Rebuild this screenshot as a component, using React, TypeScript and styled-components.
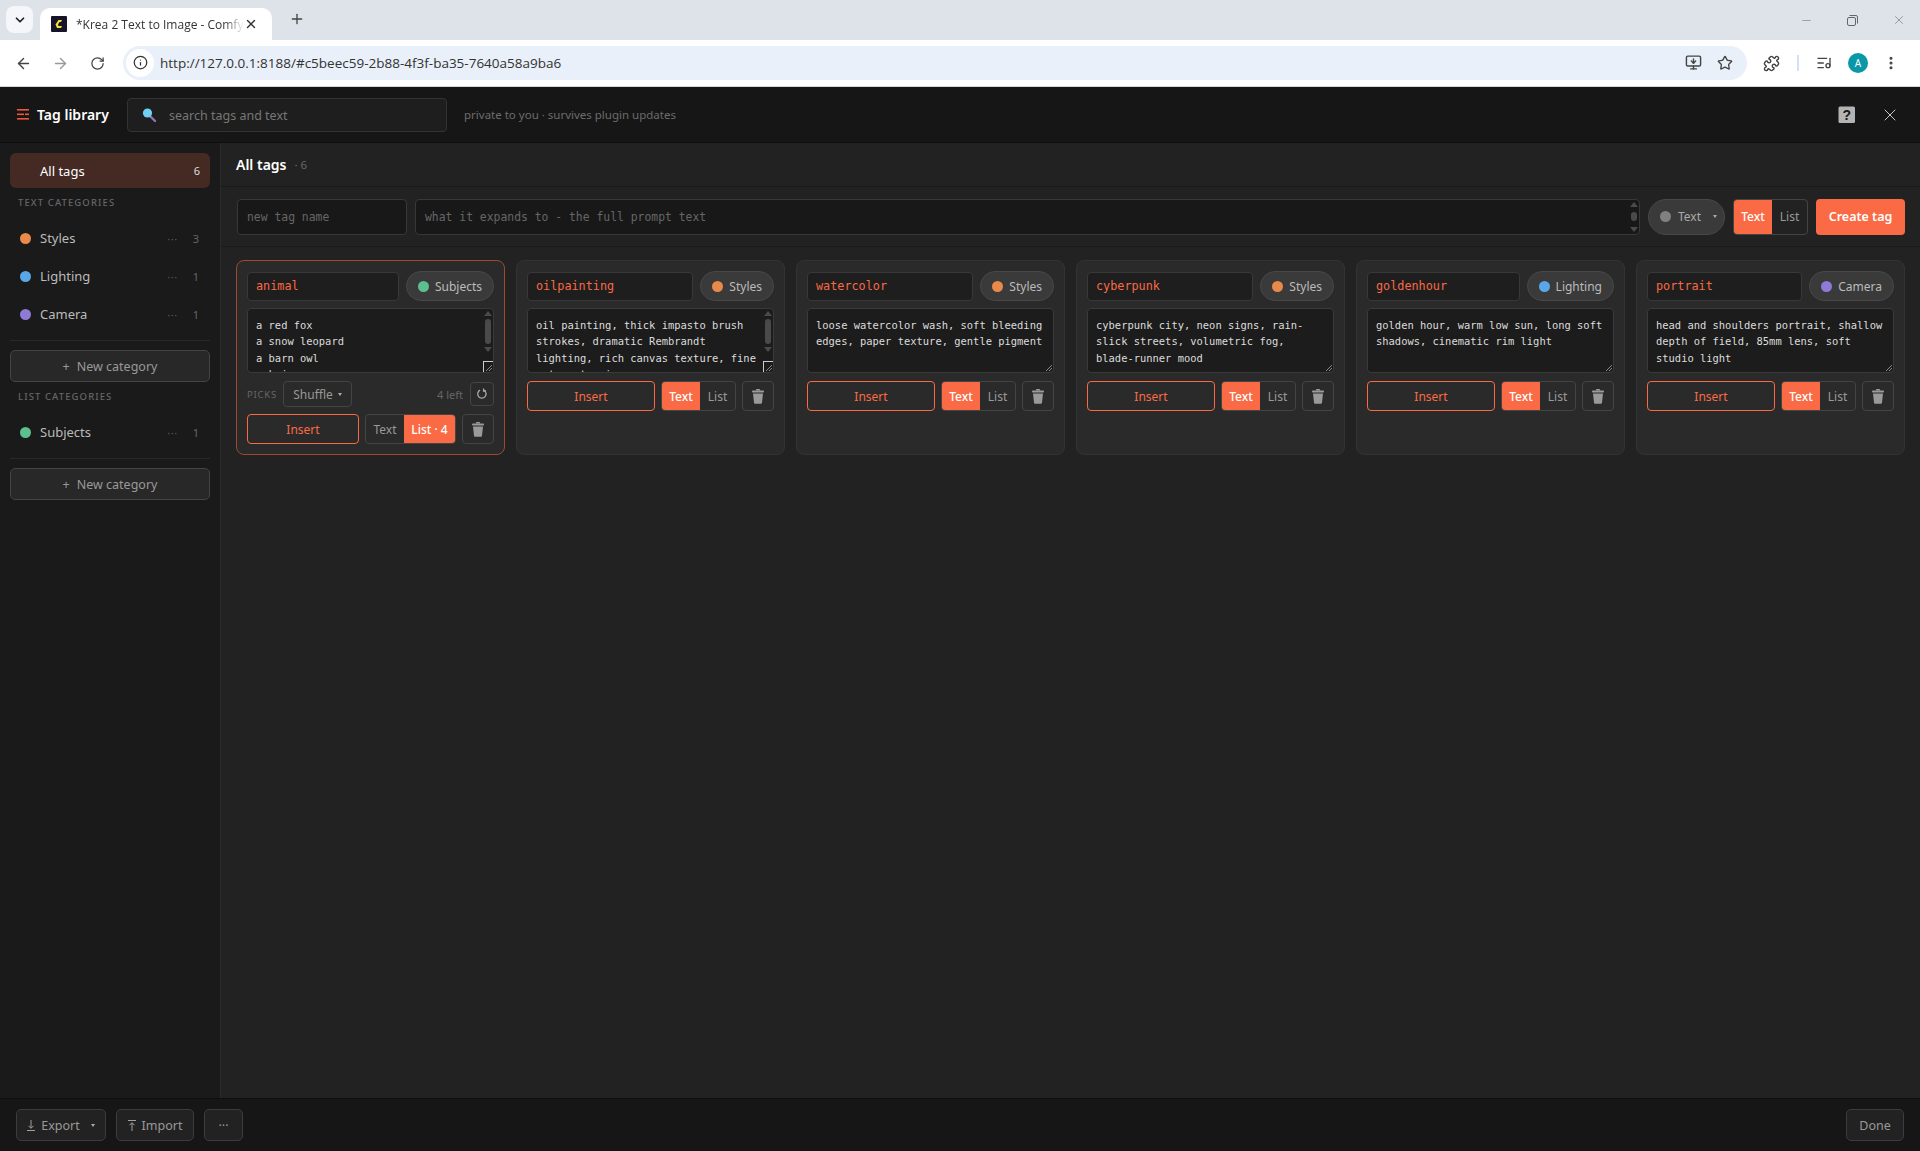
import React from "react";
import styled, { createGlobalStyle } from "styled-components";
import {
  ArrowLeft,
  ArrowRight,
  ChevronDown,
  EllipsisVertical,
  Info,
  ListMusic,
  Minus,
  MonitorDown,
  Plus,
  Puzzle,
  RotateCw,
  Star,
  X,
} from "lucide-react";

const accent = "#f96a45";
const uiFont = `"Noto Sans", "Open Sans", sans-serif`;
const monoFont = `"DejaVu Sans Mono", "Liberation Mono", monospace`;

const GlobalStyle = createGlobalStyle`
  html, body {
    margin: 0;
    padding: 0;
    height: 100%;
    background: #222;
    font-family: ${uiFont};
    overflow: hidden;
  }
  #root { height: 100%; }
  * { box-sizing: border-box; }
`;

const Page = styled.div`
  height: 1151px;
  display: flex;
  flex-direction: column;
`;

/* browser chrome */
const TabStrip = styled.div`
  height: 40px;
  background: #dee3ea;
  display: flex;
  align-items: flex-end;
  padding-left: 6px;
  flex-shrink: 0;
`;

const TabScroller = styled.div`
  width: 27px;
  height: 27px;
  margin-bottom: 7px;
  border-radius: 8px;
  background: #f4f6fa;
  color: #222;
  display: flex;
  align-items: center;
  justify-content: center;
`;

const Tab = styled.div`
  width: 232px;
  height: 32px;
  margin-left: 7px;
  background: #fff;
  border-radius: 10px 10px 0 0;
  display: flex;
  align-items: center;
  padding: 0 9px 0 11px;
  color: #333;
  font-size: 12px;
`;

const TabTitle = styled.span`
  margin-left: 9px;
  width: 168px;
  white-space: nowrap;
  overflow: hidden;
  font-family: "Open Sans", sans-serif;
  -webkit-mask-image: linear-gradient(90deg, #000 88%, transparent);
`;

const NewTab = styled.div`
  margin: 0 0 7px 11px;
  width: 28px;
  height: 28px;
  color: #444;
  display: flex;
  align-items: center;
  justify-content: center;
`;

const WindowControls = styled.div`
  margin-left: auto;
  height: 40px;
  display: flex;
  align-items: center;
  color: #666;
  padding-right: 14px;
  gap: 34px;
`;

const Toolbar = styled.div`
  height: 47px;
  background: #fff;
  border-bottom: 1px solid #d6d6d6;
  display: flex;
  align-items: center;
  padding-left: 13px;
  flex-shrink: 0;
  color: #444;
`;

const NavButton = styled.div<{ $muted?: boolean }>`
  width: 20px;
  margin-right: 17px;
  display: flex;
  justify-content: center;
  color: ${(p) => (p.$muted ? "#999" : "#444")};
`;

const Omnibox = styled.div`
  width: 1624px;
  height: 34px;
  margin-left: -1px;
  margin-top: -1px;
  background: #e9f0f9;
  border-radius: 17px;
  display: flex;
  align-items: center;
  padding-left: 3px;
  padding-right: 14px;
`;

const SiteInfo = styled.div`
  width: 28px;
  height: 28px;
  border-radius: 50%;
  background: #fff;
  color: #333;
  display: flex;
  align-items: center;
  justify-content: center;
  margin-right: 6px;
`;

const Url = styled.span`
  color: #333;
  font-size: 13.5px;
  font-family: "Open Sans", sans-serif;
  flex: 1;
`;

const OmniIcons = styled.div`
  display: flex;
  gap: 15px;
  align-items: center;
`;

const ToolbarIcons = styled.div`
  flex: 1;
  display: flex;
  align-items: center;
  padding-left: 16px;
`;

const ToolbarDivider = styled.div`
  width: 2px;
  height: 16px;
  background: #d3e0f5;
  margin: 0 17px;
`;

const Avatar = styled.div`
  width: 20px;
  height: 20px;
  border-radius: 50%;
  background: #0a97a8;
  color: #fff;
  font-size: 10px;
  display: flex;
  align-items: center;
  justify-content: center;
  margin: 0 15px 0 16px;
`;

/* app */
const Header = styled.header`
  height: 56px;
  background: #161616;
  border-bottom: 1px solid #0e0e0e;
  display: flex;
  align-items: center;
  padding: 0 20px 0 17px;
  flex-shrink: 0;
`;

const HeaderTitle = styled.span`
  color: #fff;
  font-weight: 600;
  font-size: 14px;
  margin-left: 8px;
  width: 90px;
  white-space: nowrap;
`;

const SearchBox = styled.div`
  width: 320px;
  height: 34px;
  margin-top: 1px;
  background: #1e1e1e;
  border: 1px solid #333;
  border-radius: 4px;
  display: flex;
  align-items: center;
  padding-left: 13px;
  gap: 12px;
  color: #777;
  font-size: 12.5px;
`;

const HeaderHint = styled.span`
  color: #6c6c6c;
  font-size: 11.5px;
  margin-left: 17px;
`;

const HeaderRight = styled.div`
  margin-left: auto;
  display: flex;
  align-items: center;
  gap: 24px;
  color: #c8c8c8;
`;

const Body = styled.div`
  flex: 1;
  min-height: 0;
  display: flex;
`;

const Sidebar = styled.aside`
  width: 221px;
  flex-shrink: 0;
  background: #1a1a1a;
  border-right: 1px solid #2a2a2a;
  padding: 10px 10px 0;
`;

const AllTags = styled.div`
  height: 35px;
  background: #452a24;
  border-radius: 6px;
  display: flex;
  align-items: center;
  padding: 0 10px 0 30px;
  color: #fff;
  font-size: 13px;
  justify-content: space-between;
`;

const AllCount = styled.span`
  font-size: 11px;
  color: #ddd;
`;

const SectionLabel = styled.div`
  height: 31px;
  padding: 8px 0 0 8px;
  font-size: 9.5px;
  line-height: 13px;
  letter-spacing: 1.1px;
  font-weight: 500;
  color: #666;
  white-space: nowrap;
`;

const CategoryRow = styled.div`
  height: 38px;
  display: flex;
  align-items: center;
  padding: 0 11px 0 10px;
  color: #bbb;
  font-size: 13px;
`;

const Dot = styled.span<{ $color: string; $size?: number }>`
  width: ${(p) => p.$size ?? 11}px;
  height: ${(p) => p.$size ?? 11}px;
  border-radius: 50%;
  background: ${(p) => p.$color};
  flex-shrink: 0;
`;

const CategoryName = styled.span`
  margin-left: 9px;
  flex: 1;
`;

const RowMenu = styled.span`
  color: #555;
  font-size: 11px;
  letter-spacing: 0.5px;
  margin-right: 15px;
`;

const RowCount = styled.span`
  color: #666;
  font-size: 11px;
`;

const SideDivider = styled.div`
  height: 1px;
  background: #282828;
  margin: 7px 0 9px;
`;

const NewCategory = styled.button`
  display: flex;
  width: 100%;
  height: 32px;
  align-items: center;
  justify-content: center;
  gap: 7px;
  background: #282828;
  border: 1px solid #444;
  border-radius: 5px;
  color: #999;
  font-family: ${uiFont};
  font-size: 12.5px;
`;

const Main = styled.main`
  flex: 1;
  min-width: 0;
  background: #222;
  display: flex;
  flex-direction: column;
`;

const TitleRow = styled.div`
  height: 44px;
  display: flex;
  align-items: center;
  padding: 0 15px;
  border-bottom: 1px solid #1a1a1a;
  flex-shrink: 0;
`;

const Title = styled.span`
  color: #fff;
  font-size: 14px;
  font-weight: 600;
`;

const TitleCount = styled.span`
  color: #666;
  font-size: 11.5px;
  margin-left: 8px;
`;

const FormRow = styled.div`
  height: 60px;
  display: flex;
  align-items: center;
  gap: 8px;
  padding: 0 15px 0 16px;
  border-bottom: 1px solid #1a1a1a;
  flex-shrink: 0;
`;

const NameField = styled.div`
  width: 170px;
  height: 36px;
  background: #181818;
  border: 1px solid #383838;
  border-radius: 4px;
  display: flex;
  align-items: center;
  padding-left: 9px;
  font-family: ${monoFont};
  font-size: 11.4px;
  color: #666;
`;

const ExpandField = styled(NameField)`
  flex: 1;
  position: relative;
`;

const FormScrollbar = styled.div`
  position: absolute;
  right: 1px;
  top: 2px;
  bottom: 2px;
  width: 8px;
  display: flex;
  flex-direction: column;
  align-items: center;
  justify-content: space-between;
`;

const ScrollThumb = styled.div<{ $height: number }>`
  width: 6px;
  height: ${(p) => p.$height}px;
  border-radius: 3px;
  background: #4a4a4a;
`;

const ArrowUp = styled.div`
  width: 0;
  height: 0;
  border-left: 4px solid transparent;
  border-right: 4px solid transparent;
  border-bottom: 5px solid #4a4a4a;
`;

const ArrowDown = styled(ArrowUp)`
  border-bottom: 0;
  border-top: 5px solid #4a4a4a;
`;

const Pill = styled.div`
  height: 36px;
  width: 77px;
  background: #3a3a3a;
  border: 1px solid #484848;
  border-radius: 18px;
  display: flex;
  align-items: center;
  padding-left: 11px;
  gap: 7px;
  color: #aaa;
  font-size: 12px;
`;

const Caret = styled.span`
  width: 0;
  height: 0;
  margin-left: 5px;
  border-left: 2.5px solid transparent;
  border-right: 2.5px solid transparent;
  border-top: 3px solid #aaa;
`;

const Segmented = styled.div<{ $h: number }>`
  height: ${(p) => p.$h}px;
  display: flex;
  border: 1px solid #444;
  border-radius: 4px;
  overflow: hidden;
  flex-shrink: 0;
`;

const Segment = styled.span<{ $on?: boolean; $w: number }>`
  width: ${(p) => p.$w}px;
  display: flex;
  align-items: center;
  justify-content: center;
  font-size: 12px;
  white-space: nowrap;
  background: ${(p) => (p.$on ? accent : "transparent")};
  color: ${(p) => (p.$on ? "#fff" : "#999")};
  font-weight: ${(p) => (p.$on ? 500 : 400)};
`;

const CreateButton = styled.button`
  width: 89px;
  height: 36px;
  background: ${accent};
  border: 0;
  border-radius: 4px;
  color: #fff;
  font-family: ${uiFont};
  font-size: 12.5px;
  font-weight: 600;
  padding: 0;
`;

const CardGrid = styled.div`
  display: grid;
  grid-template-columns: repeat(6, 1fr);
  gap: 11px;
  padding: 13px 15px;
  align-items: stretch;
`;

const Card = styled.article<{ $selected?: boolean }>`
  min-height: 194px;
  background: #2a2a2a;
  border: 1px solid ${(p) => (p.$selected ? "#9c4a34" : "#333")};
  border-radius: 8px;
  padding: 10px;
  display: flex;
  flex-direction: column;
`;

const CardHead = styled.div`
  display: flex;
  align-items: center;
  gap: 7px;
`;

const CardName = styled.div`
  flex: 1;
  height: 29px;
  background: #1e1e1e;
  border: 1px solid #383838;
  border-radius: 4px;
  display: flex;
  align-items: center;
  padding-left: 8px;
  color: ${accent};
  font-family: ${monoFont};
  font-size: 11.8px;
`;

const CategoryPill = styled.div`
  height: 30px;
  flex-shrink: 0;
  background: #3a3a3a;
  border: 1px solid #484848;
  border-radius: 15px;
  display: flex;
  align-items: center;
  padding: 0 11px;
  gap: 6px;
  color: #bbb;
  font-size: 12px;
`;

const TextBox = styled.div`
  position: relative;
  margin-top: 7px;
  height: 65px;
  background: #1c1c1c;
  border: 1px solid #3a3a3a;
  border-radius: 4px;
  overflow: hidden;
`;

const PromptArea = styled.textarea`
  display: block;
  width: 100%;
  height: 100%;
  padding: 8px 8px 0;
  background: transparent;
  border: 0;
  outline: 0;
  resize: none;
  overflow: hidden;
  color: #ddd;
  font-family: ${monoFont};
  font-size: 10.45px;
  line-height: 16.4px;
`;

const CardScrollbar = styled.div`
  position: absolute;
  right: 0;
  top: 2px;
  bottom: 12px;
  width: 10px;
  display: flex;
  flex-direction: column;
  align-items: center;
  gap: 3px;
`;

const Corner = styled.div`
  position: absolute;
  right: 0;
  bottom: 0;
  width: 10px;
  height: 11px;
  border: 1px solid #ccc;
  border-right: 0;
  border-bottom: 0;
  background: #1c1c1c;
`;

const ResizeGrip = styled.svg`
  position: absolute;
  right: 0;
  bottom: 0;
`;

const PicksRow = styled.div`
  display: flex;
  align-items: center;
  margin-top: 8px;
  height: 26px;
`;

const PicksLabel = styled.span`
  color: #666;
  font-size: 9.5px;
  letter-spacing: 0.8px;
  width: 36px;
`;

const Dropdown = styled.div`
  width: 69px;
  height: 26px;
  border: 1px solid #444;
  border-radius: 4px;
  display: flex;
  align-items: center;
  justify-content: center;
  color: #999;
  font-size: 12px;
`;

const LeftCount = styled.span`
  margin-left: auto;
  margin-right: 7px;
  color: #666;
  font-size: 11px;
`;

const SquareButton = styled.div<{ $w: number; $h: number }>`
  width: ${(p) => p.$w}px;
  height: ${(p) => p.$h}px;
  border: 1px solid #444;
  border-radius: 4px;
  display: flex;
  align-items: center;
  justify-content: center;
  color: #999;
  flex-shrink: 0;
`;

const ActionRow = styled.div<{ $gap: number }>`
  display: flex;
  align-items: center;
  gap: 6px;
  margin-top: ${(p) => p.$gap}px;
`;

const InsertButton = styled.button`
  flex: 1;
  min-width: 0;
  height: 30px;
  padding: 0;
  background: transparent;
  border: 1px solid ${accent};
  border-radius: 4px;
  color: ${accent};
  font-family: ${uiFont};
  font-size: 12px;
`;

const Footer = styled.footer`
  height: 53px;
  background: #161616;
  border-top: 1px solid #0e0e0e;
  display: flex;
  align-items: center;
  padding: 0 16px;
  gap: 10px;
  flex-shrink: 0;
`;

const FootButton = styled.button<{ $w: number }>`
  width: ${(p) => p.$w}px;
  height: 32px;
  background: #222;
  border: 1px solid #3c3c3c;
  border-radius: 5px;
  color: #999;
  display: flex;
  align-items: center;
  justify-content: center;
  gap: 6px;
  padding: 0;
  font-family: ${uiFont};
  font-size: 12.5px;
`;

const DoneButton = styled(FootButton)`
  margin-left: auto;
`;

const Favicon = () => (
  <svg width="16" height="16" viewBox="0 0 16 16">
    <rect width="16" height="16" rx="1" fill="#17142a" />
    <path d="M11 4H7.5L4.5 8.5 6 12h4l1-2H7.5L7 8.5 8.5 6H10z" fill="#f0e23c" />
  </svg>
);

const HamburgerIcon = () => (
  <svg width="12" height="11" viewBox="0 0 12 11">
    <g fill="#f0563a">
      <rect y="0" width="12" height="1.6" />
      <rect y="4.5" width="7" height="1.6" />
      <rect x="8" y="4.5" width="4" height="1.6" />
      <rect y="9" width="12" height="1.6" />
    </g>
  </svg>
);

const SearchIcon = () => (
  <svg width="16" height="16" viewBox="0 0 16 16">
    <line x1="9.5" y1="9.5" x2="14" y2="14" stroke="#9a6fb0" strokeWidth="2.4" strokeLinecap="round" />
    <circle cx="6.5" cy="6" r="4.6" fill="#6fd0f0" />
  </svg>
);

const HelpIcon = () => (
  <svg width="18" height="18" viewBox="0 0 18 18">
    <rect x="0.5" y="0.5" width="16.5" height="16.5" rx="1.5" fill="#b4b4b4" />
    <text x="8.75" y="14" textAnchor="middle" fontSize="14" fontWeight="700" fontFamily="Liberation Sans" fill="#161616">
      ?
    </text>
  </svg>
);

const TrashIcon = () => (
  <svg width="12" height="15" viewBox="0 0 12 15">
    <g fill="#9a9a9a">
      <rect x="4" y="0" width="4" height="1.6" rx="0.5" />
      <rect x="0" y="1.6" width="12" height="2" rx="0.8" />
      <path d="M1 4.6h10l-1 9.2a1 1 0 0 1-1 .9H3a1 1 0 0 1-1-.9z" />
    </g>
  </svg>
);

const RefreshIcon = () => (
  <svg width="12" height="12" viewBox="0 0 12 12" fill="none" stroke="#aaa" strokeWidth="1.3">
    <path d="M4 2.2a4.2 4.2 0 1 0 4 .1" />
    <path d="M8.6 0.6v2.6h2.4" transform="translate(-1 -0.2)" />
  </svg>
);

const ExportIcon = () => (
  <svg width="8" height="11" viewBox="0 0 8 11" fill="none" stroke="#a0a0a0" strokeWidth="1">
    <path d="M4 0v8M1.5 5.8 4 8.3l2.5-2.5M0 10.5h8" />
  </svg>
);

const ImportIcon = () => (
  <svg width="8" height="11" viewBox="0 0 8 11" fill="none" stroke="#a0a0a0" strokeWidth="1">
    <path d="M4 11V3M1.5 5.2 4 2.7l2.5 2.5M0 0.5h8" />
  </svg>
);

const RestoreIcon = () => (
  <svg width="11" height="11" viewBox="0 0 11 11" fill="none" stroke="#666" strokeWidth="1">
    <rect x="0.5" y="2.5" width="8" height="8" rx="1.5" />
    <path d="M2.5 0.5h6.5a1.5 1.5 0 0 1 1.5 1.5v6.5" />
  </svg>
);

const Grip = () => (
  <ResizeGrip width="10" height="10" viewBox="0 0 10 10" stroke="#888" strokeWidth="1">
    <path d="M9 3 3 9M9 6 6 9" />
  </ResizeGrip>
);

type TagData = {
  name: string;
  cat: string;
  color: string;
  text: string;
  list?: boolean;
  scroll?: boolean;
};

const tags: TagData[] = [
  {
    name: "animal",
    cat: "Subjects",
    color: "#5dbf8f",
    text: "a red fox\na snow leopard\na barn owl\na koi carp",
    list: true,
    scroll: true,
  },
  {
    name: "oilpainting",
    cat: "Styles",
    color: "#e88a4a",
    text: "oil painting, thick impasto brush strokes, dramatic Rembrandt lighting, rich canvas texture, fine art masterpiece",
    scroll: true,
  },
  {
    name: "watercolor",
    cat: "Styles",
    color: "#e88a4a",
    text: "loose watercolor wash, soft bleeding edges, paper texture, gentle pigment",
  },
  {
    name: "cyberpunk",
    cat: "Styles",
    color: "#e88a4a",
    text: "cyberpunk city, neon signs, rain-slick streets, volumetric fog, blade-runner mood",
  },
  {
    name: "goldenhour",
    cat: "Lighting",
    color: "#5aa7e8",
    text: "golden hour, warm low sun, long soft shadows, cinematic rim light",
  },
  {
    name: "portrait",
    cat: "Camera",
    color: "#8f7ad8",
    text: "head and shoulders portrait, shallow depth of field, 85mm lens, soft studio light",
  },
];

const TagCard: React.FC<{ tag: TagData }> = ({ tag }) => (
  <Card $selected={tag.list}>
    <CardHead>
      <CardName>{tag.name}</CardName>
      <CategoryPill>
        <Dot $color={tag.color} />
        {tag.cat}
      </CategoryPill>
    </CardHead>
    <TextBox>
      <PromptArea readOnly value={tag.text} />
      {tag.scroll ? (
        <>
          <CardScrollbar>
            <ArrowUp />
            <ScrollThumb $height={25} />
            <ArrowDown />
          </CardScrollbar>
          <Corner />
        </>
      ) : null}
      <Grip />
    </TextBox>
    {tag.list && (
      <PicksRow>
        <PicksLabel>PICKS</PicksLabel>
        <Dropdown>
          Shuffle
          <Caret />
        </Dropdown>
        <LeftCount>4 left</LeftCount>
        <SquareButton $w={24} $h={24}>
          <RefreshIcon />
        </SquareButton>
      </PicksRow>
    )}
    <ActionRow $gap={tag.list ? 7 : 8}>
      <InsertButton>Insert</InsertButton>
      <Segmented $h={30}>
        <Segment $w={tag.list ? 38 : 38} $on={!tag.list}>
          Text
        </Segment>
        <Segment $w={tag.list ? 51 : 35} $on={tag.list}>
          {tag.list ? "List · 4" : "List"}
        </Segment>
      </Segmented>
      <SquareButton $w={32} $h={30}>
        <TrashIcon />
      </SquareButton>
    </ActionRow>
  </Card>
);

const App: React.FC = () => (
  <Page>
    <GlobalStyle />
    <TabStrip>
      <TabScroller>
        <ChevronDown size={14} strokeWidth={3} />
      </TabScroller>
      <Tab>
        <Favicon />
        <TabTitle>*Krea 2 Text to Image - ComfyUI</TabTitle>
        <X size={14} strokeWidth={2.4} />
      </Tab>
      <NewTab>
        <Plus size={16} />
      </NewTab>
      <WindowControls>
        <Minus size={13} strokeWidth={1} />
        <RestoreIcon />
        <X size={14} strokeWidth={1} />
      </WindowControls>
    </TabStrip>
    <Toolbar>
      <NavButton>
        <ArrowLeft size={17} />
      </NavButton>
      <NavButton $muted>
        <ArrowRight size={17} />
      </NavButton>
      <NavButton>
        <RotateCw size={15} />
      </NavButton>
      <Omnibox>
        <SiteInfo>
          <Info size={15} />
        </SiteInfo>
        <Url>http://127.0.0.1:8188/#c5beec59-2b88-4f3f-ba35-7640a58a9ba6</Url>
        <OmniIcons>
          <MonitorDown size={17} />
          <Star size={16} />
        </OmniIcons>
      </Omnibox>
      <ToolbarIcons>
        <Puzzle size={17} />
        <ToolbarDivider />
        <ListMusic size={16} />
        <Avatar>A</Avatar>
        <EllipsisVertical size={16} strokeWidth={2.6} />
      </ToolbarIcons>
    </Toolbar>
    <Header>
      <HamburgerIcon />
      <HeaderTitle>Tag library</HeaderTitle>
      <SearchBox>
        <SearchIcon />
        search tags and text
      </SearchBox>
      <HeaderHint>private to you · survives plugin updates</HeaderHint>
      <HeaderRight>
        <HelpIcon />
        <X size={20} strokeWidth={1.2} />
      </HeaderRight>
    </Header>
    <Body>
      <Sidebar>
        <AllTags>
          All tags
          <AllCount>6</AllCount>
        </AllTags>
        <SectionLabel>TEXT CATEGORIES</SectionLabel>
        <CategoryRow>
          <Dot $color="#e88a4a" />
          <CategoryName>Styles</CategoryName>
          <RowMenu>···</RowMenu>
          <RowCount>3</RowCount>
        </CategoryRow>
        <CategoryRow>
          <Dot $color="#5aa7e8" />
          <CategoryName>Lighting</CategoryName>
          <RowMenu>···</RowMenu>
          <RowCount>1</RowCount>
        </CategoryRow>
        <CategoryRow>
          <Dot $color="#8f7ad8" />
          <CategoryName>Camera</CategoryName>
          <RowMenu>···</RowMenu>
          <RowCount>1</RowCount>
        </CategoryRow>
        <SideDivider />
        <NewCategory>
          <span>+</span> New category
        </NewCategory>
        <SectionLabel>LIST CATEGORIES</SectionLabel>
        <CategoryRow>
          <Dot $color="#5dbf8f" />
          <CategoryName>Subjects</CategoryName>
          <RowMenu>···</RowMenu>
          <RowCount>1</RowCount>
        </CategoryRow>
        <SideDivider />
        <NewCategory>
          <span>+</span> New category
        </NewCategory>
      </Sidebar>
      <Main>
        <TitleRow>
          <Title>All tags</Title>
          <TitleCount>· 6</TitleCount>
        </TitleRow>
        <FormRow>
          <NameField>new tag name</NameField>
          <ExpandField>
            what it expands to - the full prompt text
            <FormScrollbar>
              <ArrowUp />
              <ScrollThumb $height={9} />
              <ArrowDown />
            </FormScrollbar>
          </ExpandField>
          <Pill>
            <Dot $color="#808080" />
            Text
            <Caret />
          </Pill>
          <Segmented $h={36}>
            <Segment $w={38} $on>
              Text
            </Segment>
            <Segment $w={35}>List</Segment>
          </Segmented>
          <CreateButton>Create tag</CreateButton>
        </FormRow>
        <CardGrid>
          {tags.map((t) => (
            <TagCard key={t.name} tag={t} />
          ))}
        </CardGrid>
      </Main>
    </Body>
    <Footer>
      <FootButton $w={90}>
        <ExportIcon />
        Export
        <Caret />
      </FootButton>
      <FootButton $w={78}>
        <ImportIcon />
        Import
      </FootButton>
      <FootButton $w={39}>···</FootButton>
      <DoneButton $w={58}>Done</DoneButton>
    </Footer>
  </Page>
);

export default App;
